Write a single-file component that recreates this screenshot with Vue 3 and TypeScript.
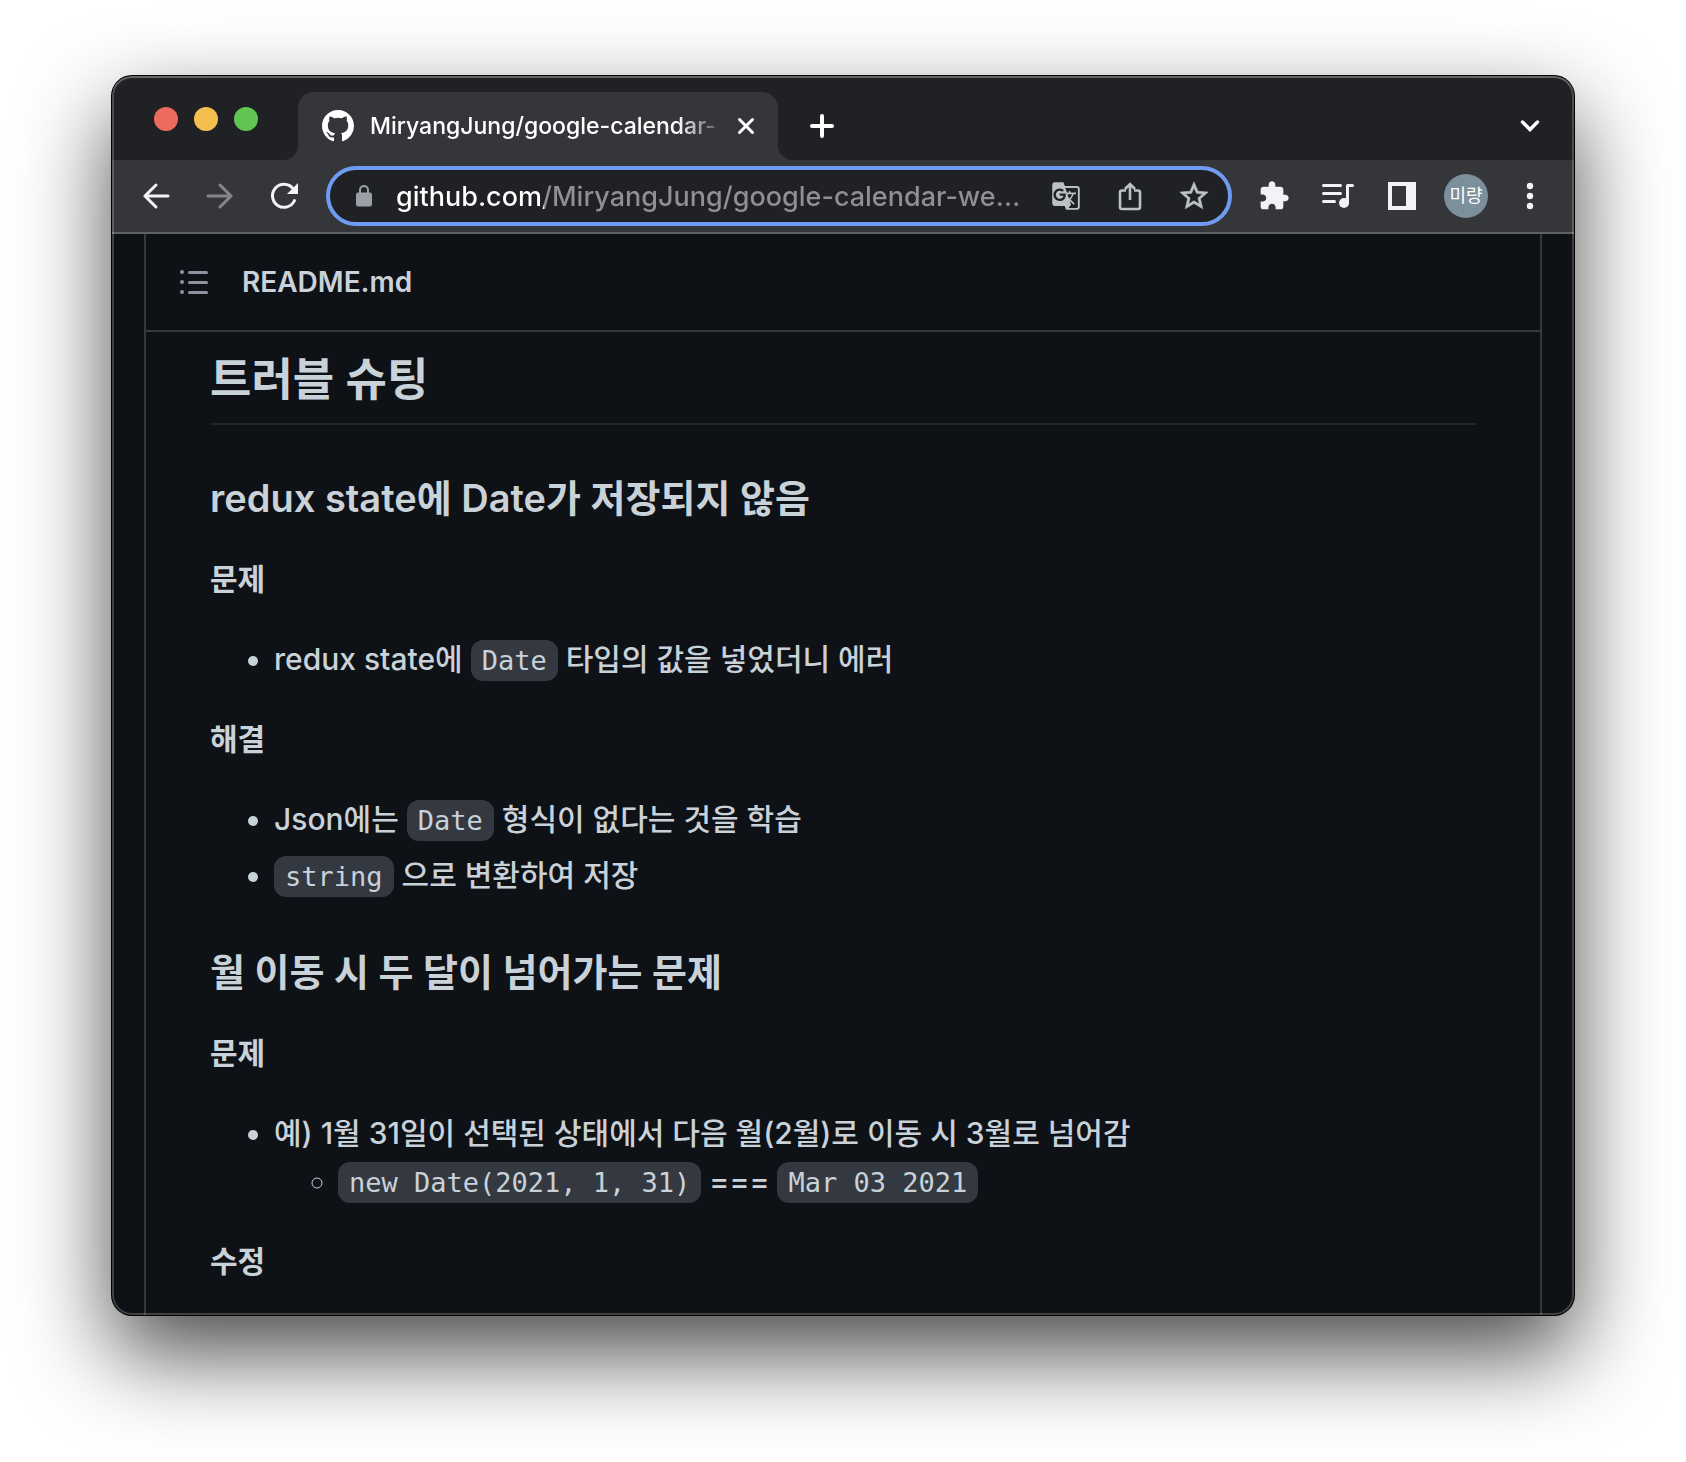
<script setup lang="ts">
import { ref } from 'vue'

interface Piece {
  text: string
  code?: boolean
}
interface Item {
  pieces: Piece[]
  children?: Piece[][]
}
interface Part {
  label: string
  items: Item[]
}
interface Topic {
  title: string
  parts: Part[]
}

const tabTitle = 'MiryangJung/google-calendar-'
const address = ref('github.com/MiryangJung/google-calendar-we…')

const topics: Topic[] = [
  {
    title: 'redux state에 Date가 저장되지 않음',
    parts: [
      {
        label: '문제',
        items: [
          { pieces: [{ text: 'redux state에 ' }, { text: 'Date', code: true }, { text: ' 타입의 값을 넣었더니 에러' }] },
        ],
      },
      {
        label: '해결',
        items: [
          { pieces: [{ text: 'Json에는 ' }, { text: 'Date', code: true }, { text: ' 형식이 없다는 것을 학습' }] },
          { pieces: [{ text: 'string', code: true }, { text: ' 으로 변환하여 저장' }] },
        ],
      },
    ],
  },
  {
    title: '월 이동 시 두 달이 넘어가는 문제',
    parts: [
      {
        label: '문제',
        items: [
          {
            pieces: [{ text: '예) 1월 31일이 선택된 상태에서 다음 월(2월)로 이동 시 3월로 넘어감' }],
            children: [
              [{ text: 'new Date(2021, 1, 31)', code: true }, { text: ' === ' }, { text: 'Mar 03 2021', code: true }],
            ],
          },
        ],
      },
      { label: '수정', items: [] },
    ],
  },
]
</script>

<template>
  <div class="desktop">
    <div class="window">
      <header class="tabstrip">
        <div class="lights">
          <button class="light close" aria-label="Close window"></button>
          <button class="light minimise" aria-label="Minimise window"></button>
          <button class="light zoom" aria-label="Zoom window"></button>
        </div>
        <div class="tab">
          <svg class="favicon" width="32" height="32" viewBox="0 0 16 16" aria-hidden="true">
            <path fill="#fff" d="M8 0C3.58 0 0 3.58 0 8c0 3.54 2.29 6.53 5.47 7.59.4.07.55-.17.55-.38 0-.19-.01-.82-.01-1.49-2.01.37-2.53-.49-2.69-.94-.09-.23-.48-.94-.82-1.13-.28-.15-.68-.52-.01-.53.63-.01 1.08.58 1.23.82.72 1.21 1.87.87 2.33.66.07-.52.28-.87.51-1.07-1.78-.2-3.64-.89-3.64-3.95 0-.87.31-1.59.82-2.15-.08-.2-.36-1.02.08-2.12 0 0 .67-.21 2.2.82.64-.18 1.32-.27 2-.27.68 0 1.36.09 2 .27 1.53-1.04 2.2-.82 2.2-.82.44 1.1.16 1.92.08 2.12.51.56.82 1.27.82 2.15 0 3.07-1.87 3.75-3.65 3.95.29.25.54.73.54 1.48 0 1.07-.01 1.93-.01 2.2 0 .21.15.46.55.38A8.01 8.01 0 0016 8c0-4.42-3.58-8-8-8z" />
          </svg>
          <span class="tab-title">{{ tabTitle }}</span>
          <button class="tab-close" aria-label="Close tab">
            <svg width="18" height="18" viewBox="0 0 18 18"><path d="M2.5 2.5l13 13M15.500 2.500l-13 13" fill="none" stroke="#fff" stroke-width="3" stroke-linecap="round" /></svg>
          </button>
        </div>
        <button class="tool new-tab" aria-label="New tab">
          <svg width="24" height="24" viewBox="0 0 24 24"><path d="M12 2v20M2 12h20" fill="none" stroke="#fff" stroke-width="4" stroke-linecap="round" /></svg>
        </button>
        <button class="tool tab-search" aria-label="Search tabs">
          <svg width="20" height="14" viewBox="0 0 20 14"><path d="M2.500 3l7.500 7.500L17.500 3" fill="none" stroke="#fff" stroke-width="3.400" stroke-linecap="round" /></svg>
        </button>
      </header>

      <nav class="toolbar">
        <div class="group">
          <button class="tool" aria-label="Back">
            <svg width="28" height="28" viewBox="0 0 28 28"><path d="M14 3L3 14l11 11M3 14h23" fill="none" stroke="#f1f3f4" stroke-width="3" stroke-linecap="round" /></svg>
          </button>
          <button class="tool" aria-label="Forward">
            <svg width="28" height="28" viewBox="0 0 28 28"><path d="M14 3l11 11-11 11M25 14H2" fill="none" stroke="#85868a" stroke-width="3" stroke-linecap="round" /></svg>
          </button>
          <button class="tool" aria-label="Reload">
            <svg width="28" height="28" viewBox="0 0 28 28">
              <path d="M24.500 18.500A11.500 11.500 0 1 1 23 6.600" fill="none" stroke="#f1f3f4" stroke-width="3" stroke-linecap="round" />
              <path d="M28 1v11H17z" fill="#f1f3f4" />
            </svg>
          </button>
        </div>

        <div class="omnibox">
          <svg class="lock" width="16" height="22" viewBox="0 0 16 22" aria-hidden="true">
            <rect x="0" y="7.500" width="16" height="14" rx="2" fill="#9aa0a6" />
            <path d="M4 8V5a4 4 0 0 1 8 0v3" fill="none" stroke="#9aa0a6" stroke-width="2" />
          </svg>
          <input v-model="address" class="address" type="text" aria-label="Address" spellcheck="false" />
          <div class="group">
            <button class="tool" aria-label="Translate this page">
              <svg width="30" height="30" viewBox="0 0 24 24"><path fill="#bdc1c6" d="M21 4H11l-1-3H3c-1.100 0-2 .9-2 2v15c0 1.100.9 2 2 2h8l1 3h9c1.100 0 2-.9 2-2V6c0-1.100-.9-2-2-2zM7 16c-2.760 0-5-2.240-5-5s2.240-5 5-5c1.350 0 2.480.5 3.350 1.300L9.030 8.570c-.38-.36-1.040-.78-2.030-.78-1.740 0-3.150 1.440-3.150 3.210S5.260 14.210 7 14.210c2.010 0 2.840-1.440 2.920-2.410H7v-1.710h4.680c.07.31.12.61.12 1.020C11.800 13.970 9.890 16 7 16zm6.170-5.420h3.700c-.43 1.250-1.110 2.430-2.050 3.470-.31-.35-.6-.72-.86-1.100l-.79-2.370zm8.330 9.920c0 .55-.45 1-1 1H14l2-2.500-1.040-3.100 3.100 3.100.92-.92-3.300-3.250.02-.02c1.130-1.250 1.930-2.690 2.400-4.220H20v-1.300h-4.530V8h-1.290v1.290h-1.440L11.460 5.500h9.040c.55 0 1 .45 1 1v14z" /></svg>
            </button>
            <button class="tool" aria-label="Share this page">
              <svg width="24" height="30" viewBox="0 0 24 30">
                <path d="M8 9.500H4a2 2 0 0 0-2 2V26a2 2 0 0 0 2 2h16a2 2 0 0 0 2-2V11.500a2 2 0 0 0-2-2h-4M12 19V3M7 8l5-5 5 5" fill="none" stroke="#bdc1c6" stroke-width="2.600" />
              </svg>
            </button>
            <button class="tool" aria-label="Bookmark this page">
              <svg width="34" height="34" viewBox="0 0 24 24"><path fill="#bdc1c6" stroke="#bdc1c6" stroke-width=".4" d="M22 9.240l-7.190-.62L12 2 9.190 8.630 2 9.240l5.460 4.730L5.820 21 12 17.270 18.180 21l-1.630-7.030L22 9.240zM12 15.400l-3.760 2.270 1-4.280-3.320-2.880 4.380-.38L12 6.100l1.710 4.040 4.380.38-3.320 2.880 1 4.280L12 15.400z" /></svg>
            </button>
          </div>
        </div>

        <div class="group">
          <button class="tool" aria-label="Extensions">
            <svg width="32" height="32" viewBox="0 0 24 24"><path fill="#f1f3f4" d="M20.500 11H19V7c0-1.100-.9-2-2-2h-4V3.500C13 2.120 11.880 1 10.500 1S8 2.120 8 3.500V5H4c-1.100 0-1.990.9-1.990 2v3.800H3.500c1.490 0 2.700 1.210 2.700 2.700s-1.210 2.700-2.700 2.700H2V20c0 1.100.9 2 2 2h3.800v-1.500c0-1.490 1.210-2.700 2.700-2.700 1.490 0 2.700 1.210 2.700 2.700V22H17c1.100 0 2-.9 2-2v-4h1.500c1.380 0 2.500-1.120 2.500-2.500S21.880 11 20.500 11z" /></svg>
          </button>
          <button class="tool" aria-label="Media controls">
            <svg width="32" height="26" viewBox="0 0 32 26">
              <path d="M1.500 2.500h17M1.500 10.500h17M1.500 18.500h11" fill="none" stroke="#f1f3f4" stroke-width="3" stroke-linecap="round" />
              <circle cx="22" cy="20" r="5" fill="#f1f3f4" />
              <path d="M25.500 20V2.500h5" fill="none" stroke="#f1f3f4" stroke-width="3" stroke-linecap="round" stroke-linejoin="round" />
            </svg>
          </button>
          <button class="tool" aria-label="Side panel">
            <svg width="28" height="28" viewBox="0 0 28 28"><path fill="#f1f3f4" fill-rule="evenodd" d="M0 0h28v28H0zM4 4v20h14V4z" /></svg>
          </button>
          <button class="tool avatar" aria-label="Profile">미량</button>
          <button class="tool" aria-label="Menu">
            <svg width="8" height="28" viewBox="0 0 8 28" fill="#f1f3f4"><circle cx="4" cy="4" r="3.200" /><circle cx="4" cy="14" r="3.200" /><circle cx="4" cy="24" r="3.200" /></svg>
          </button>
        </div>
      </nav>

      <main class="page">
        <section class="readme">
          <div class="readme-head">
            <button class="outline" aria-label="Outline">
              <svg width="28" height="24" viewBox="0 0 28 24" fill="#8b949e">
                <circle cx="2" cy="2" r="2" /><circle cx="2" cy="12" r="2" /><circle cx="2" cy="22" r="2" />
                <rect x="8" y="1" width="20" height="3" rx="1.500" /><rect x="8" y="11" width="20" height="3" rx="1.500" /><rect x="8" y="21" width="20" height="3" rx="1.500" />
              </svg>
            </button>
            <a class="filename" href="#readme">README.md</a>
          </div>
          <article class="markdown">
            <h2>트러블 슈팅</h2>
            <template v-for="topic in topics" :key="topic.title">
              <h3>{{ topic.title }}</h3>
              <template v-for="part in topic.parts" :key="part.label">
                <p><strong>{{ part.label }}</strong></p>
                <ul v-if="part.items.length">
                  <li v-for="(item, i) in part.items" :key="i">
                    <template v-for="(piece, j) in item.pieces" :key="j"><code v-if="piece.code">{{ piece.text }}</code><template v-else>{{ piece.text }}</template></template>
                    <ul v-if="item.children">
                      <li v-for="(child, k) in item.children" :key="k">
                        <template v-for="(piece, j) in child" :key="j"><code v-if="piece.code">{{ piece.text }}</code><template v-else>{{ piece.text }}</template></template>
                      </li>
                    </ul>
                  </li>
                </ul>
              </template>
            </template>
          </article>
        </section>
      </main>
    </div>
  </div>
</template>

<style>
body {
  margin: 0;
  background: #fff;
}
</style>

<style scoped>
.desktop {
  padding: 76px 112px 148px;
  overflow: hidden;
  font-family: Inter, "Noto Sans CJK KR", sans-serif;
}
.window {
  position: relative;
  overflow: hidden;
  border-radius: 20px;
  background: #0e1116;
  box-shadow: 0 0 0 1px #000, 0 38px 90px rgba(0, 0, 0, 0.72);
}
.window::after {
  content: "";
  position: absolute;
  inset: 0;
  border-radius: 20px;
  box-shadow: inset 0 0 0 2px rgba(255, 255, 255, 0.2), inset 0 2px 0 rgba(255, 255, 255, 0.14);
  pointer-events: none;
}
button {
  margin: 0;
  padding: 0;
  border: 0;
  background: none;
  color: inherit;
  font-family: inherit;
}
svg {
  display: block;
}
.tabstrip {
  display: flex;
  align-items: flex-end;
  height: 84px;
  padding: 0 24px 0 42px;
  background: #202124;
}
.lights {
  display: flex;
  gap: 16px;
  margin-right: 40px;
  padding-bottom: 29px;
}
.light {
  width: 24px;
  height: 24px;
  border-radius: 50%;
}
.close {
  background: #ed6a5e;
}
.minimise {
  background: #f5bf4f;
}
.zoom {
  background: #61c554;
}
.tab {
  position: relative;
  display: flex;
  align-items: center;
  gap: 16px;
  box-sizing: border-box;
  width: 480px;
  height: 68px;
  padding: 0 16px 0 24px;
  border-radius: 16px 16px 0 0;
  background: #35363a;
}
.tab::before,
.tab::after {
  content: "";
  position: absolute;
  bottom: 0;
  width: 16px;
  height: 16px;
}
.tab::before {
  right: 100%;
  background: radial-gradient(circle at 0 0, transparent 16px, #35363a 17px);
}
.tab::after {
  left: 100%;
  background: radial-gradient(circle at 100% 0, transparent 16px, #35363a 17px);
}
.favicon {
  flex: none;
}
.tab-title {
  flex: 1;
  color: #fff;
  font-size: 23px;
  font-weight: 500;
  line-height: 32px;
  white-space: nowrap;
  mask-image: linear-gradient(90deg, #000 308px, transparent 356px);
}
.tab-close {
  display: grid;
  place-items: center;
  flex: none;
  width: 32px;
  height: 32px;
  margin-left: -8px;
}
.tool {
  display: grid;
  place-items: center;
  flex: none;
  width: 40px;
  height: 44px;
}
.new-tab {
  margin: 0 auto 12px 24px;
}
.tab-search {
  margin-bottom: 12px;
}
.toolbar {
  display: flex;
  align-items: center;
  gap: 22px;
  height: 72px;
  padding: 0 24px;
  border-bottom: 2px solid #5f6163;
  background: #35363a;
}
.group {
  display: flex;
  align-items: center;
  gap: 24px;
}
.omnibox {
  display: flex;
  align-items: center;
  flex: 1;
  min-width: 0;
  box-sizing: border-box;
  height: 60px;
  padding: 0 14px 0 26px;
  border: 4px solid #6f9bf2;
  border-radius: 30px;
  background: #202124;
}
.lock {
  flex: none;
}
.address {
  flex: 1;
  min-width: 0;
  margin: 0 4px 0 24px;
  padding: 2px 0 0;
  border: 0;
  outline: 0;
  color: #96979a;
  background: linear-gradient(90deg, #fff 148px, #8f9092 148px);
  background-clip: text;
  -webkit-background-clip: text;
  -webkit-text-fill-color: transparent;
  font-family: inherit;
  font-size: 27px;
  font-weight: 500;
  line-height: 40px;
  text-overflow: ellipsis;
}
.avatar {
  width: 44px;
  margin: 0 -2px;
  border-radius: 50%;
  background: #7c8f9b;
  color: #fff;
  font-size: 18px;
  line-height: 24px;
}
.page {
  padding: 0 32px;
}
.readme {
  border: solid #35383c;
  border-width: 0 2px;
}
.readme-head {
  display: flex;
  align-items: center;
  gap: 34px;
  height: 96px;
  padding-left: 34px;
  border-bottom: 2px solid #35383c;
}
.filename {
  color: #c9d1d9;
  font-size: 28px;
  font-weight: 600;
  line-height: 40px;
  text-decoration: none;
}
.markdown {
  padding: 18px 64px 30px;
  color: #c9d1d9;
  font-size: 30px;
  font-weight: 450;
  line-height: 48px;
}
.markdown h2 {
  margin: 0 0 48px;
  padding-bottom: 13px;
  border-bottom: 2px solid #212529;
  font-size: 45px;
  font-weight: 600;
  line-height: 60px;
}
.markdown h3 {
  margin: 48px 0 32px;
  font-size: 38px;
  font-weight: 600;
  line-height: 50px;
}
.markdown p {
  margin: 0 0 32px;
}
.markdown p:last-child {
  margin-bottom: 0;
}
.markdown strong {
  font-weight: 600;
}
.markdown ul {
  margin: 0 0 32px;
  padding-left: 64px;
}
.markdown ul ul {
  margin: 0;
}
.markdown li + li {
  margin-top: 8px;
}
.markdown code {
  padding: 5px 11px;
  border-radius: 12px;
  background: #343941;
  font-family: "DejaVu Sans Mono", monospace;
  font-size: 27px;
  font-weight: 400;
  line-height: 32px;
}
</style>
